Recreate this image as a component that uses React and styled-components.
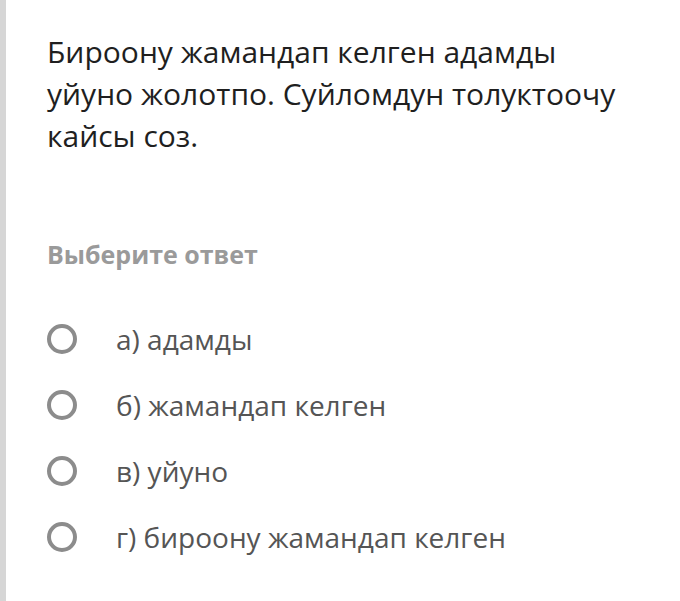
import React from "react";
import styled, { createGlobalStyle } from "styled-components";

const Global = createGlobalStyle`
  body {
    margin: 0;
    background: #ffffff;
    font-family: "Open Sans", "Noto Sans", sans-serif;
  }
`;

const Card = styled.div`
  min-height: 601px;
  box-sizing: border-box;
  border-left: 6px solid #d6d6d6;
  padding: 31px 20px 0 41px;
`;

const Question = styled.p`
  margin: 0;
  font-size: 30px;
  line-height: 42px;
  color: #1f1f1f;
  max-width: 582px;
`;

const Hint = styled.h4`
  margin: 82px 0 0;
  font-size: 25px;
  line-height: 30px;
  font-weight: 700;
  color: #9a9a9a;
`;

const Options = styled.div`
  margin-top: 37px;
  display: flex;
  flex-direction: column;
`;

const Option = styled.label`
  display: flex;
  align-items: center;
  height: 66px;
  cursor: pointer;
`;

const Radio = styled.span`
  width: 30px;
  height: 30px;
  box-sizing: border-box;
  border-radius: 50%;
  border: 4px solid #8c8c8c;
  flex-shrink: 0;
`;

const OptionText = styled.span`
  margin-left: 39px;
  font-size: 28px;
  color: #555555;
`;

const answers = [
  "а) адамды",
  "б) жамандап келген",
  "в) уйуно",
  "г) бироону жамандап келген",
];

export default function App() {
  return (
    <>
      <Global />
      <Card>
        <Question>
          Бироону жамандап келген адамды уйуно жолотпо. Суйломдун толуктоочу
          кайсы соз.
        </Question>
        <Hint>Выберите ответ</Hint>
        <Options>
          {answers.map((a) => (
            <Option key={a}>
              <Radio />
              <OptionText>{a}</OptionText>
            </Option>
          ))}
        </Options>
      </Card>
    </>
  );
}
